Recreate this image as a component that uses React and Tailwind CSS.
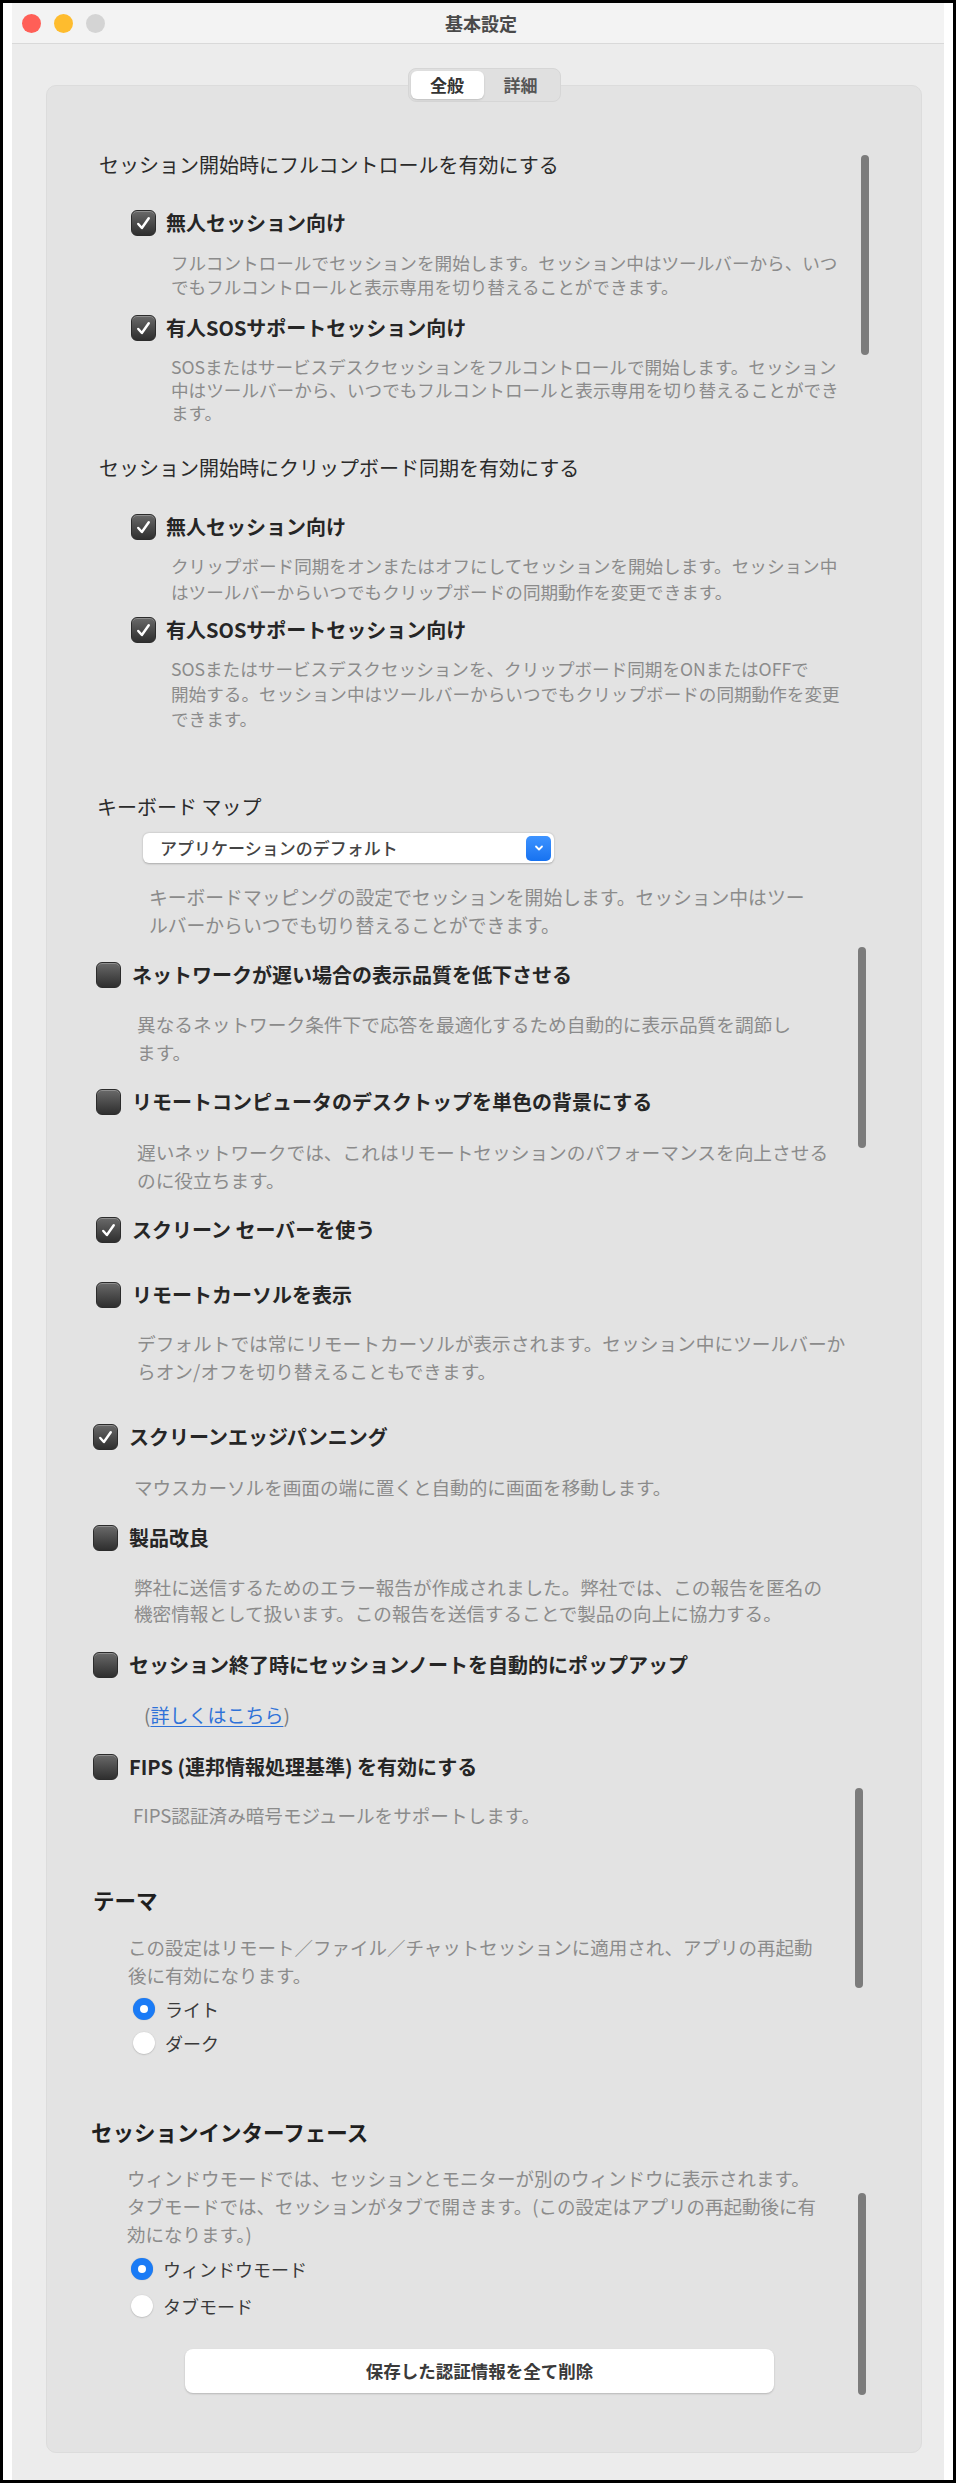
import React from 'react';

const FONT = "font-['Noto_Sans_CJK_JP','Noto_Sans',sans-serif]";

function Box({ checked }) {
  return (
    <span className="w-[25px] h-[26px] shrink-0 rounded-[6px] border border-[#2c2c2c] bg-gradient-to-b from-[#6a6a6a] to-[#2f2f2f] shadow-[inset_0_1px_0_rgba(255,255,255,0.25)] flex items-center justify-center">
      {checked && (
        <svg width="19" height="19" viewBox="0 0 20 20" fill="none">
          <path d="M4.5 10.5l3.8 4.2L15.5 4.5" stroke="white" strokeWidth="2.6" strokeLinecap="round" strokeLinejoin="round" />
        </svg>
      )}
    </span>
  );
}

function Check({ checked, label, className = '', gap = 'gap-[11px]' }) {
  return (
    <div className={`flex items-center h-[28px] ${gap} ${className}`}>
      <Box checked={checked} />
      <span className="text-[20px] leading-[28px] font-bold text-[#262626] whitespace-nowrap">{label}</span>
    </div>
  );
}

function Desc({ lines, className = '' }) {
  return (
    <div className={`text-[#8b8b8b] whitespace-nowrap ${className}`}>
      {lines.map((l, i) => <div key={i}>{l}</div>)}
    </div>
  );
}

function Radio({ on, label, className = '' }) {
  return (
    <div className={`flex items-center h-[28px] gap-[10px] ${className}`}>
      {on ? (
        <span className="w-[22px] h-[22px] rounded-full bg-[#1a7bf6] flex items-center justify-center shadow-[0_0_1px_rgba(0,0,0,0.3)]">
          <span className="w-[8px] h-[8px] rounded-full bg-white" />
        </span>
      ) : (
        <span className="w-[22px] h-[22px] rounded-full bg-white shadow-[0_0.5px_1.5px_rgba(0,0,0,0.25)]" />
      )}
      <span className="text-[18px] leading-[28px] text-[#3a3a3a]">{label}</span>
    </div>
  );
}

function Scroll({ top, left, height }) {
  return <div className="absolute w-[8px] rounded-full bg-[#7c7c7c]" style={{ top, left, height }} />;
}

export default function App() {
  return (
    <div className={`relative w-[956px] h-[2483px] border-[3px] border-black bg-white px-[9px] ${FONT}`}>
      <div className="h-full bg-[#ececec] flex flex-col">
        {/* title bar */}
        <div className="h-[41px] shrink-0 bg-[#f3f3f3] border-b border-[#d9d9d9] grid grid-cols-[1fr_auto_1fr] items-center">
          <div className="flex items-center gap-[13px] pl-[10px]">
            <span className="w-[19px] h-[19px] rounded-full bg-[#ff5f57]" />
            <span className="w-[19px] h-[19px] rounded-full bg-[#febc2e]" />
            <span className="w-[19px] h-[19px] rounded-full bg-[#d4d4d4]" />
          </div>
          <div className="text-[18px] font-bold text-[#4a4a4a] pl-[6px]">基本設定</div>
          <div />
        </div>

        {/* tabs */}
        <div className="ml-[34px] w-[876px] flex justify-center mt-[24px] relative z-10">
          <div className="flex h-[34px] p-[2px] rounded-[8px] bg-[#e0e0e0] border border-[#d6d6d6]">
            <div className="w-[73px] rounded-[6px] bg-white shadow-[0_1px_2px_rgba(0,0,0,0.15)] flex items-center justify-center text-[17px] font-bold text-[#333]">全般</div>
            <div className="w-[74px] flex items-center justify-center text-[17px] font-bold text-[#555]">詳細</div>
          </div>
        </div>

        {/* panel */}
        <div className="ml-[34px] w-[876px] mt-[-17px] h-[2368px] rounded-[10px] bg-[#e3e3e3] border border-[#dcdcdc] pt-[65px]">
          {/* section 1 */}
          <div className="ml-[52px] text-[20px] leading-[28px] text-[#2b2b2b]">セッション開始時にフルコントロールを有効にする</div>
          <Check checked label="無人セッション向け" className="ml-[84px] mt-[30px]" gap="gap-[10px]" />
          <Desc className="ml-[124px] mt-[14px] text-[17.6px] leading-[24px]" lines={[
            'フルコントロールでセッションを開始します。セッション中はツールバーから、いつ',
            'でもフルコントロールと表示専用を切り替えることができます。',
          ]} />
          <Check checked label="有人SOSサポートセッション向け" className="ml-[84px] mt-[15px]" gap="gap-[10px]" />
          <Desc className="ml-[124px] mt-[13px] text-[17.6px] leading-[23px]" lines={[
            'SOSまたはサービスデスクセッションをフルコントロールで開始します。セッション',
            '中はツールバーから、いつでもフルコントロールと表示専用を切り替えることができ',
            'ます。',
          ]} />
          <div className="ml-[52px] mt-[30px] text-[20px] leading-[28px] text-[#2b2b2b]">セッション開始時にクリップボード同期を有効にする</div>
          <Check checked label="無人セッション向け" className="ml-[84px] mt-[31px]" gap="gap-[10px]" />
          <Desc className="ml-[124px] mt-[12px] text-[17.6px] leading-[26px]" lines={[
            'クリップボード同期をオンまたはオフにしてセッションを開始します。セッション中',
            'はツールバーからいつでもクリップボードの同期動作を変更できます。',
          ]} />
          <Check checked label="有人SOSサポートセッション向け" className="ml-[84px] mt-[11px]" gap="gap-[10px]" />
          <Desc className="ml-[124px] mt-[12px] text-[17.6px] leading-[25px]" lines={[
            'SOSまたはサービスデスクセッションを、クリップボード同期をONまたはOFFで',
            '開始する。セッション中はツールバーからいつでもクリップボードの同期動作を変更',
            'できます。',
          ]} />

          {/* section 2 */}
          <div className="ml-[50px] mt-[62px] text-[20px] leading-[28px] text-[#2b2b2b]">キーボード マップ</div>
          <div className="ml-[96px] mt-[12px] w-[411px] h-[30px] rounded-[6px] bg-white shadow-[0_0.5px_2px_rgba(0,0,0,0.25)] flex items-center justify-between pl-[17px] pr-[3px]">
            <span className="text-[17px] text-[#444] font-medium">アプリケーションのデフォルト</span>
            <span className="w-[25px] h-[25px] rounded-[5px] bg-gradient-to-b from-[#3d93ff] to-[#1672f0] flex items-center justify-center">
              <svg width="12" height="12" viewBox="0 0 12 12" fill="none">
                <path d="M3 4.5l3 3 3-3" stroke="white" strokeWidth="1.8" strokeLinecap="round" strokeLinejoin="round" />
              </svg>
            </span>
          </div>
          <Desc className="ml-[102px] mt-[20px] text-[18.8px] leading-[28px]" lines={[
            'キーボードマッピングの設定でセッションを開始します。セッション中はツー',
            'ルバーからいつでも切り替えることができます。',
          ]} />
          <Check label="ネットワークが遅い場合の表示品質を低下させる" className="ml-[49px] mt-[22px]" />
          <Desc className="ml-[90px] mt-[21px] text-[18.7px] leading-[28px]" lines={[
            '異なるネットワーク条件下で応答を最適化するため自動的に表示品質を調節し',
            'ます。',
          ]} />
          <Check label="リモートコンピュータのデスクトップを単色の背景にする" className="ml-[49px] mt-[22px]" />
          <Desc className="ml-[90px] mt-[22px] text-[18.7px] leading-[28px]" lines={[
            '遅いネットワークでは、これはリモートセッションのパフォーマンスを向上させる',
            'のに役立ちます。',
          ]} />
          <Check checked label="スクリーン セーバーを使う" className="ml-[49px] mt-[22px]" />
          <Check label="リモートカーソルを表示" className="ml-[49px] mt-[37px]" />
          <Desc className="ml-[90px] mt-[20px] text-[18.7px] leading-[28px]" lines={[
            'デフォルトでは常にリモートカーソルが表示されます。セッション中にツールバーか',
            'らオン/オフを切り替えることもできます。',
          ]} />

          {/* section 3 */}
          <Check checked label="スクリーンエッジパンニング" className="ml-[46px] mt-[38px]" />
          <Desc className="ml-[87px] mt-[22px] text-[18.6px] leading-[28px]" lines={[
            'マウスカーソルを画面の端に置くと自動的に画面を移動します。',
          ]} />
          <Check label="製品改良" className="ml-[46px] mt-[23px]" />
          <Desc className="ml-[87px] mt-[22px] text-[18.6px] leading-[26px]" lines={[
            '弊社に送信するためのエラー報告が作成されました。弊社では、この報告を匿名の',
            '機密情報として扱います。この報告を送信することで製品の向上に協力する。',
          ]} />
          <Check label="セッション終了時にセッションノートを自動的にポップアップ" className="ml-[46px] mt-[25px]" />
          <div className="ml-[97px] mt-[22px] text-[19px] leading-[28px] text-[#7a7a7a]">
            (<span className="text-[#2f72d8] underline underline-offset-[3px] decoration-[#2f72d8]">詳しくはこちら</span>)
          </div>
          <Check label="FIPS (連邦情報処理基準) を有効にする" className="ml-[46px] mt-[24px]" />
          <Desc className="ml-[86px] mt-[20px] text-[18.6px] leading-[28px]" lines={[
            'FIPS認証済み暗号モジュールをサポートします。',
          ]} />
          <div className="ml-[46px] mt-[56px] text-[21.5px] leading-[30px] font-bold text-[#1f1f1f]">テーマ</div>
          <Desc className="ml-[81px] mt-[18px] text-[18.5px] leading-[28px]" lines={[
            'この設定はリモート／ファイル／チャットセッションに適用され、アプリの再起動',
            '後に有効になります。',
          ]} />
          <Radio on label="ライト" className="ml-[86px] mt-[6px]" />
          <Radio label="ダーク" className="ml-[86px] mt-[6px]" />

          {/* section 4 */}
          <div className="ml-[44px] mt-[60px] text-[21.5px] leading-[30px] font-bold text-[#1f1f1f]">セッションインターフェース</div>
          <Desc className="ml-[80px] mt-[17px] text-[18.5px] leading-[28px]" lines={[
            'ウィンドウモードでは、セッションとモニターが別のウィンドウに表示されます。',
            'タブモードでは、セッションがタブで開きます。(この設定はアプリの再起動後に有',
            '効になります。)',
          ]} />
          <Radio on label="ウィンドウモード" className="ml-[84px] mt-[7px]" />
          <Radio label="タブモード" className="ml-[84px] mt-[9px]" />
          <div className="ml-[138px] mt-[29px] w-[589px] h-[44px] rounded-[8px] bg-white shadow-[0_1px_2px_rgba(0,0,0,0.2)] flex items-center justify-center text-[17.5px] font-bold text-[#3a3a3a]">
            保存した認証情報を全て削除
          </div>
        </div>
      </div>

      <Scroll top={152} left={858} height={200} />
      <Scroll top={944} left={855} height={201} />
      <Scroll top={1785} left={852} height={200} />
      <Scroll top={2190} left={855} height={202} />
    </div>
  );
}
